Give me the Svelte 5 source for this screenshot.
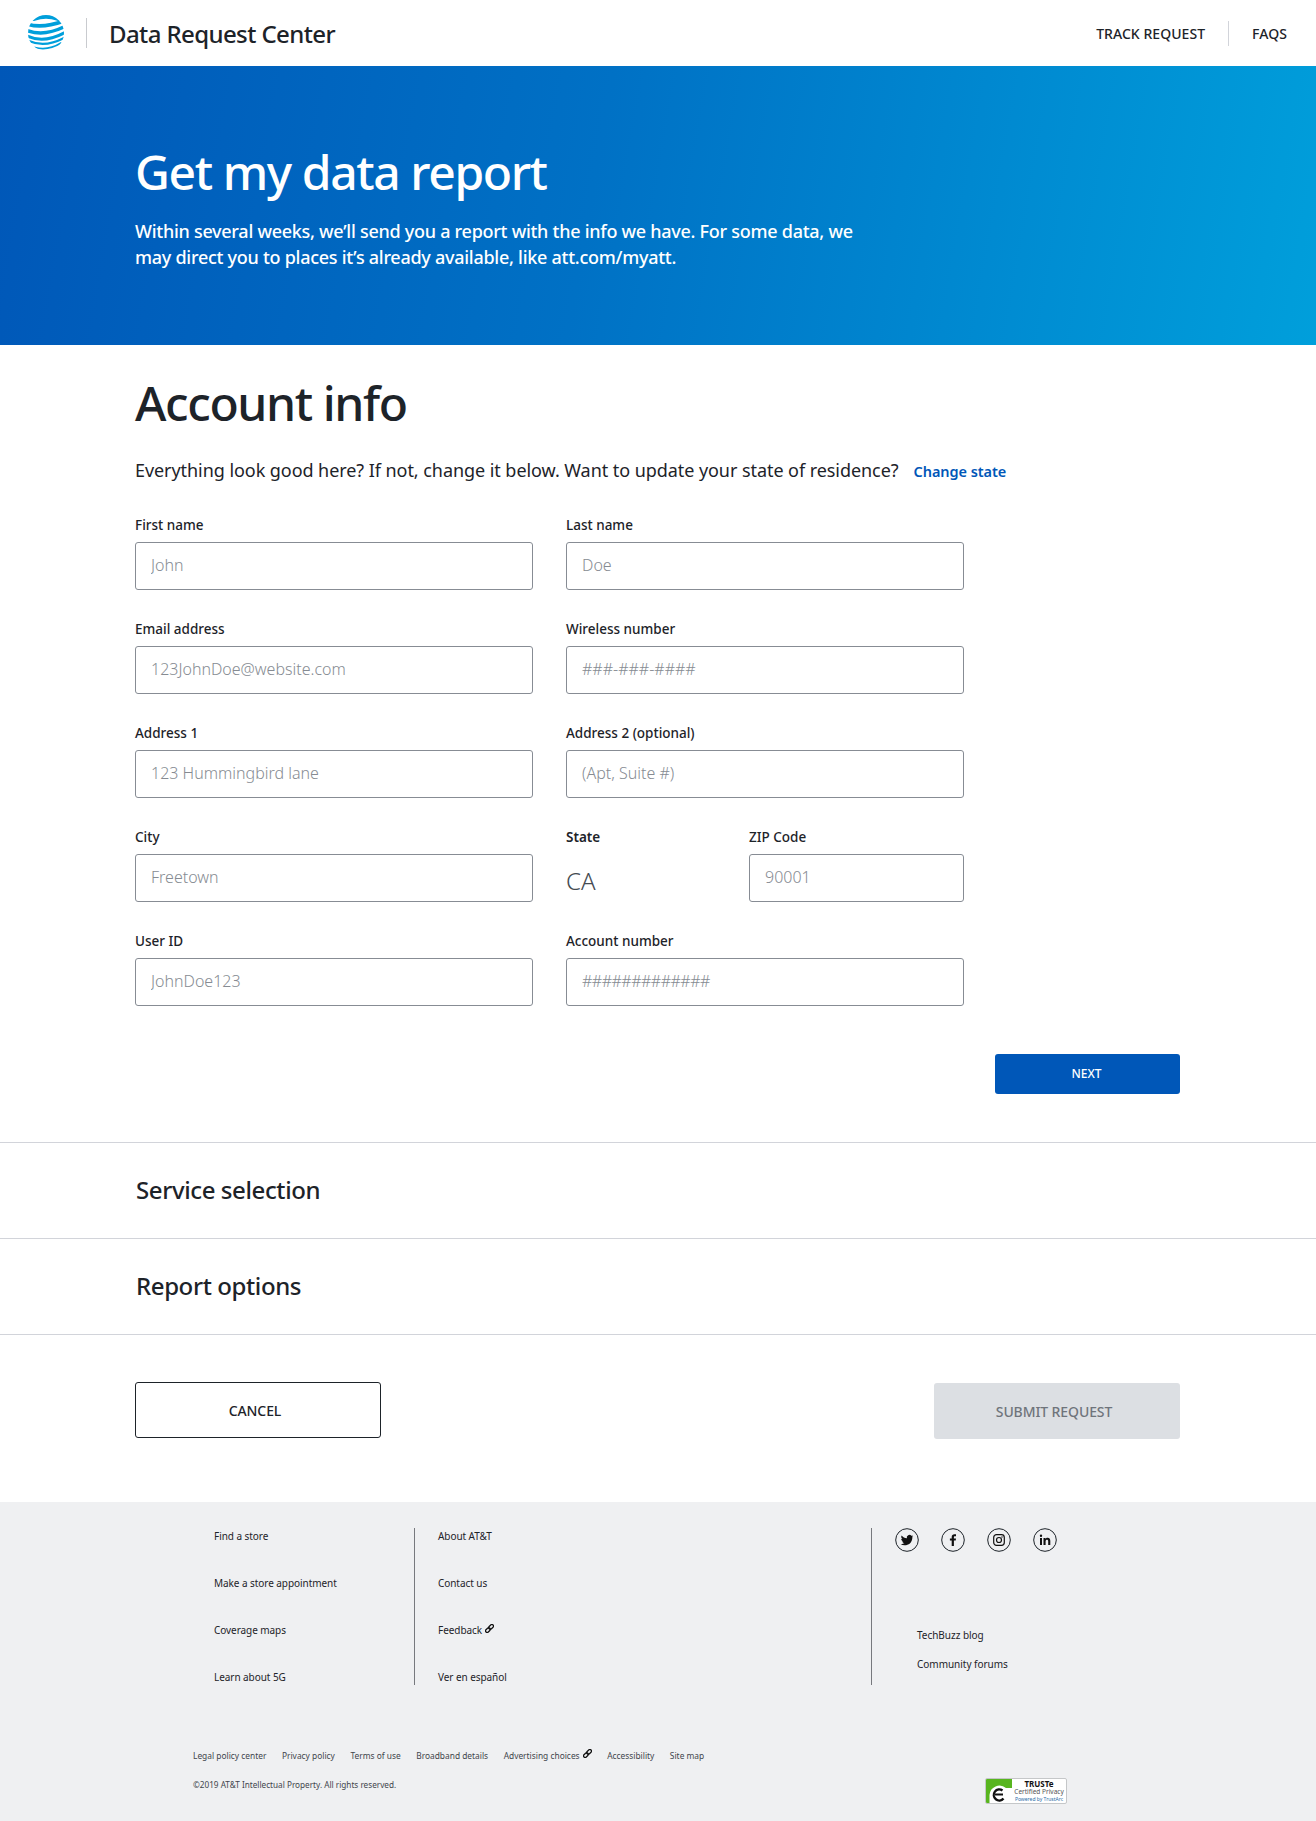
<script>
  const leftLinks = ['Find a store', 'Make a store appointment', 'Coverage maps', 'Learn about 5G'];
  const midLinks = ['About AT&T', 'Contact us', 'Feedback', 'Ver en español'];
  const legal = ['Legal policy center', 'Privacy policy', 'Terms of use', 'Broadband details', 'Advertising choices', 'Accessibility', 'Site map'];
</script>

<svelte:head><title>Data Request Center</title></svelte:head>

{#snippet chain()}
  <svg class="chain" viewBox="0 0 10 10" width="9" height="9" aria-hidden="true">
    <g fill="none" stroke="#111" stroke-width="1.4" transform="rotate(-45 5 5)">
      <rect x="-.5" y="3.2" width="6" height="3.6" rx="1.8"/>
      <rect x="4.500" y="3.2" width="6" height="3.6" rx="1.8"/>
    </g>
  </svg>
{/snippet}

<header class="top">
  <div class="brand">
    <svg class="globe" viewBox="0 0 36 36" width="36" height="36" aria-hidden="true">
      <defs><clipPath id="g"><circle cx="18" cy="18" r="18"/></clipPath></defs>
      <circle cx="18" cy="18" r="18" fill="#fff"/>
      <g clip-path="url(#g)" fill="none" stroke="#009fdb" stroke-linecap="round">
        <path d="M6 3.500Q18 -1 30 3.500" stroke-width="5"/>
        <path d="M-1 9Q14 14 36 6" stroke-width="3.600"/>
        <path d="M-1 15.500Q16 22 37 11.500" stroke-width="3.400"/>
        <path d="M-1 21Q16 29 37 17.500" stroke-width="3"/>
        <path d="M1 26Q17 33 36 23" stroke-width="2.400"/>
        <path d="M7 32.500Q20 36 33 28" stroke-width="1.800"/>
      </g>
    </svg>
    <span class="sep"></span>
    <span class="title">Data Request Center</span>
  </div>
  <nav class="topnav">
    <a href="#track">TRACK REQUEST</a>
    <span class="sep small"></span>
    <a href="#faqs">FAQS</a>
  </nav>
</header>

<section class="hero">
  <h1>Get my data report</h1>
  <p>Within several weeks, we’ll send you a report with the info we have. For some data, we may direct you to places it’s already available, like att.com/myatt.</p>
</section>

<main class="account">
  <h2>Account info</h2>
  <div class="lead">
    <span>Everything look good here? If not, change it below. Want to update your state of residence?</span>
    <a href="#state">Change state</a>
  </div>

  <form class="fields">
    <label class="field">First name<input placeholder="John" /></label>
    <label class="field">Last name<input placeholder="Doe" /></label>
    <label class="field">Email address<input placeholder="123JohnDoe@website.com" /></label>
    <label class="field">Wireless number<input placeholder="###-###-####" /></label>
    <label class="field">Address 1<input placeholder="123 Hummingbird lane" /></label>
    <label class="field">Address 2 (optional)<input placeholder="(Apt, Suite #)" /></label>
    <label class="field">City<input placeholder="Freetown" /></label>
    <div class="split">
      <div class="field state"><span>State</span><div class="state-value">CA</div></div>
      <label class="field">ZIP Code<input placeholder="90001" /></label>
    </div>
    <label class="field">User ID<input placeholder="JohnDoe123" /></label>
    <label class="field">Account number<input class="hashes" placeholder="#############" /></label>
  </form>

  <div class="next-row"><button class="next">NEXT</button></div>
</main>

<div class="step">Service selection</div>
<div class="step">Report options</div>

<div class="actions">
  <button class="cancel">CANCEL</button>
  <button class="submit" disabled>SUBMIT REQUEST</button>
</div>

<footer class="foot">
  <div class="foot-cols">
    <ul class="col first">
      {#each leftLinks as l}<li>{l}</li>{/each}
    </ul>
    <ul class="col second">
      {#each midLinks as l}
        <li>{l}{#if l === 'Feedback'}{@render chain()}{/if}</li>
      {/each}
    </ul>
    <div class="col third">
      <div class="social">
        <svg viewBox="0 0 24 24" width="24" height="24" aria-label="Twitter">
          <circle cx="12" cy="12" r="11.300" fill="none" stroke="#1d2329"/>
          <path d="M18.400 8.200c-.5.2-1 .4-1.500.4.5-.3.9-.8 1.100-1.400-.5.3-1 .5-1.600.6a2.600 2.600 0 0 0-4.500 2.400c-2.200-.1-4.100-1.100-5.300-2.700-.7 1.200-.3 2.700.8 3.500-.4 0-.8-.1-1.200-.3 0 1.300.9 2.400 2.100 2.600-.4.1-.8.1-1.200 0 .3 1 1.300 1.800 2.400 1.800a5.300 5.300 0 0 1-3.900 1.100c3.900 2.500 11.800 1.100 11.800-7.200.5-.3.9-.7 1.200-1.100z" fill="#111"/>
        </svg>
        <svg viewBox="0 0 24 24" width="24" height="24" aria-label="Facebook">
          <circle cx="12" cy="12" r="11.300" fill="none" stroke="#1d2329"/>
          <path d="M12.900 18v-5.400h1.800l.3-2.100h-2.100V9.200c0-.6.200-1 1-1h1.100V6.300c-.2 0-.9-.1-1.600-.1-1.600 0-2.700 1-2.700 2.800v1.500H8.900v2.100h1.800V18z" fill="#111"/>
        </svg>
        <svg viewBox="0 0 24 24" width="24" height="24" aria-label="Instagram">
          <circle cx="12" cy="12" r="11.300" fill="none" stroke="#1d2329"/>
          <rect x="6.700" y="6.700" width="10.600" height="10.600" rx="2.800" fill="none" stroke="#111" stroke-width="1.200"/>
          <circle cx="12" cy="12" r="2.500" fill="none" stroke="#111" stroke-width="1.200"/>
          <circle cx="15" cy="9" r=".7" fill="#111"/>
        </svg>
        <svg viewBox="0 0 24 24" width="24" height="24" aria-label="LinkedIn">
          <circle cx="12" cy="12" r="11.300" fill="none" stroke="#1d2329"/>
          <path d="M7 10h2v7H7zM8 6.600a1.200 1.200 0 1 1 0 2.400 1.200 1.200 0 0 1 0-2.400zM10.500 10h2v1c.4-.7 1.200-1.200 2.200-1.200 2 0 2.600 1.300 2.600 3.200v4h-2.100v-3.600c0-1-.3-1.700-1.200-1.700s-1.400.7-1.400 1.700V17h-2.100z" fill="#111"/>
        </svg>
      </div>
      <ul class="blog">
        <li>TechBuzz blog</li>
        <li>Community forums</li>
      </ul>
    </div>
  </div>

  <div class="legal-wrap">
    <div class="legal">
      <ul>
        {#each legal as l}
          <li>{l}{#if l === 'Advertising choices'}{@render chain()}{/if}</li>
        {/each}
      </ul>
      <p>©2019 AT&amp;T Intellectual Property. All rights reserved.</p>
    </div>
    <div class="truste">
      <svg viewBox="0 0 26 24" width="26" height="24" aria-hidden="true">
        <path d="M0 0h26v9H20a10 10 0 0 0-16.500 7V24H0z" fill="#58b51f"/>
        <path d="M16.500 11.500a5.500 5.500 0 1 0 1 8" fill="none" stroke="#111" stroke-width="2.400"/>
        <path d="M9 15.500h8" stroke="#111" stroke-width="1.800"/>
      </svg>
      <div class="truste-text">
        <b>TRUSTe</b>
        <span>Certified Privacy</span>
        <em>Powered by TrustArc</em>
      </div>
    </div>
  </div>
</footer>

<style>
  :global(body) {
    margin: 0;
    background: #fff;
    color: #1d2329;
    font-family: "Noto Sans", "Open Sans", sans-serif;
  }
  ul { list-style: none; margin: 0; padding: 0; }
  a { text-decoration: none; color: inherit; }

  .top {
    height: 66px;
    display: flex;
    justify-content: space-between;
    align-items: center;
    padding: 0 29px 0 28px;
  }
  .brand, .topnav { display: flex; align-items: center; }
  .globe { margin-right: 22px; }
  .sep { width: 1px; height: 30px; background: #c9cbcf; margin-right: 22px; }
  .title { font-size: 24px; font-weight: 500; letter-spacing: -.6px; }
  .topnav a { font-size: 14px; font-weight: 500; letter-spacing: .05px; }
  .sep.small { height: 25px; margin: 0 23px; background: #d2d4da; }

  .hero {
    height: 279px;
    box-sizing: border-box;
    padding: 72px 0 0 135px;
    color: #fff;
    background: linear-gradient(100deg, #0057b8 0%, #0071c5 45%, #009fdb 100%);
  }
  .hero h1 { margin: 0; font-size: 48px; line-height: 68px; font-weight: 500; letter-spacing: -1.4px; }
  .hero p { margin: 12px 0 0; width: 730px; font-size: 18px; line-height: 26px; font-weight: 500; letter-spacing: -.27px; }

  .account { padding: 23px 136px 0 135px; }
  .account h2 { margin: 0; font-size: 48px; line-height: 70px; font-weight: 500; letter-spacing: -1.4px; }
  .lead { margin-top: 17px; display: flex; align-items: center; gap: 15px; font-size: 18px; line-height: 26px; letter-spacing: -.06px; }
  .lead a { color: #0057b8; font-size: 14.500px; font-weight: 600; padding-top: 3px; }

  .fields {
    margin-top: 28px;
    width: 829px;
    display: grid;
    grid-template-columns: 398px 398px;
    column-gap: 33px;
    row-gap: 26px;
  }
  .field { display: flex; flex-direction: column; gap: 4px; font-size: 13.500px; line-height: 26px; font-weight: 500; }
  .field input {
    box-sizing: border-box;
    width: 100%;
    height: 48px;
    padding: 0 15px 2px;
    border: 1px solid #878c94;
    border-radius: 3px;
    background: #fff;
    font: 300 16px "Noto Sans", sans-serif;
    outline: none;
  }
  .field input.hashes { letter-spacing: -.5px; }
  .field input::placeholder { color: #868b92; opacity: 1; }
  .split { display: grid; grid-template-columns: 183px 215px; }
  .state span { font-weight: 600; }
  .state-value { font-size: 24px; font-weight: 300; line-height: 48px; color: #454b52; padding-top: 3px; height: 48px; box-sizing: border-box; }

  .next-row { display: flex; justify-content: flex-end; margin-top: 48px; }
  .next {
    width: 185px;
    height: 40px;
    padding: 0 2px 2px 0;
    border: 0;
    border-radius: 3px;
    background: #0057b8;
    color: #fff;
    font: 500 12px "Noto Sans", sans-serif;
  }

  .step {
    height: 95px;
    line-height: 93px;
    padding-left: 136px;
    border-top: 1px solid #d2d4da;
    font-size: 24px;
    font-weight: 500;
    letter-spacing: -.4px;
  }
  .account + .step { margin-top: 48px; }

  .actions {
    display: flex;
    justify-content: space-between;
    align-items: flex-start;
    padding: 47px 136px 63px 135px;
    border-top: 1px solid #d2d4da;
  }
  .actions button { width: 246px; height: 56px; border-radius: 3px; font: 500 14px "Noto Sans", sans-serif; letter-spacing: -.1px; padding: 0 6px 0 0; }
  .cancel { background: #fff; color: #1d2329; border: 1px solid #1d2329; }
  .submit { background: #dcdfe3; color: #6f747b; border: 0; margin-top: 1px; }

  .foot { background: #eff0f2; height: 319px; box-sizing: border-box; padding-top: 26px; font-size: 10px; }
  .foot-cols { display: flex; padding-left: 214px; height: 157px; }
  .col { height: 157px; }
  .first, .second { display: flex; flex-direction: column; justify-content: space-between; line-height: 16px; padding: 0; }
  .first { width: 200px; border-right: 1px solid #77797e; }
  .second { width: 433px; padding-left: 23px; border-right: 1px solid #77797e; }
  .first li, .second li { height: 16px; letter-spacing: -.06px; }
  .chain { margin-left: 3px; vertical-align: 1px; }
  .third { padding-left: 23px; }
  .social { display: flex; gap: 22px; }
  .blog { margin: 75px 0 0 22px; display: flex; flex-direction: column; gap: 13px; line-height: 16px; letter-spacing: -.03px; }

  .legal-wrap { display: flex; justify-content: space-between; align-items: flex-start; padding: 64px 249px 0 193px; }
  .legal ul { display: flex; gap: 15.500px; font-size: 8.400px; line-height: 14px; color: #3f454c; }
  .legal p { margin: 15px 0 0; font-size: 8.200px; line-height: 14px; color: #3f454c; }
  .truste {
    display: flex;
    width: 82px;
    height: 26px;
    box-sizing: border-box;
    margin-top: 29px;
    background: #fff;
    border: 1px solid #c5c7c9;
    border-radius: 2px;
    overflow: hidden;
  }
  .truste svg { width: 26px; height: 24px; flex: none; }
  .truste-text { display: flex; flex-direction: column; align-items: center; flex: 1; line-height: 7.500px; }
  .truste-text b { font-size: 8px; line-height: 9px; color: #111; }
  .truste-text span { font-size: 6.500px; color: #555; }
  .truste-text em { font-style: normal; font-size: 5px; color: #2a6ca8; }
</style>
